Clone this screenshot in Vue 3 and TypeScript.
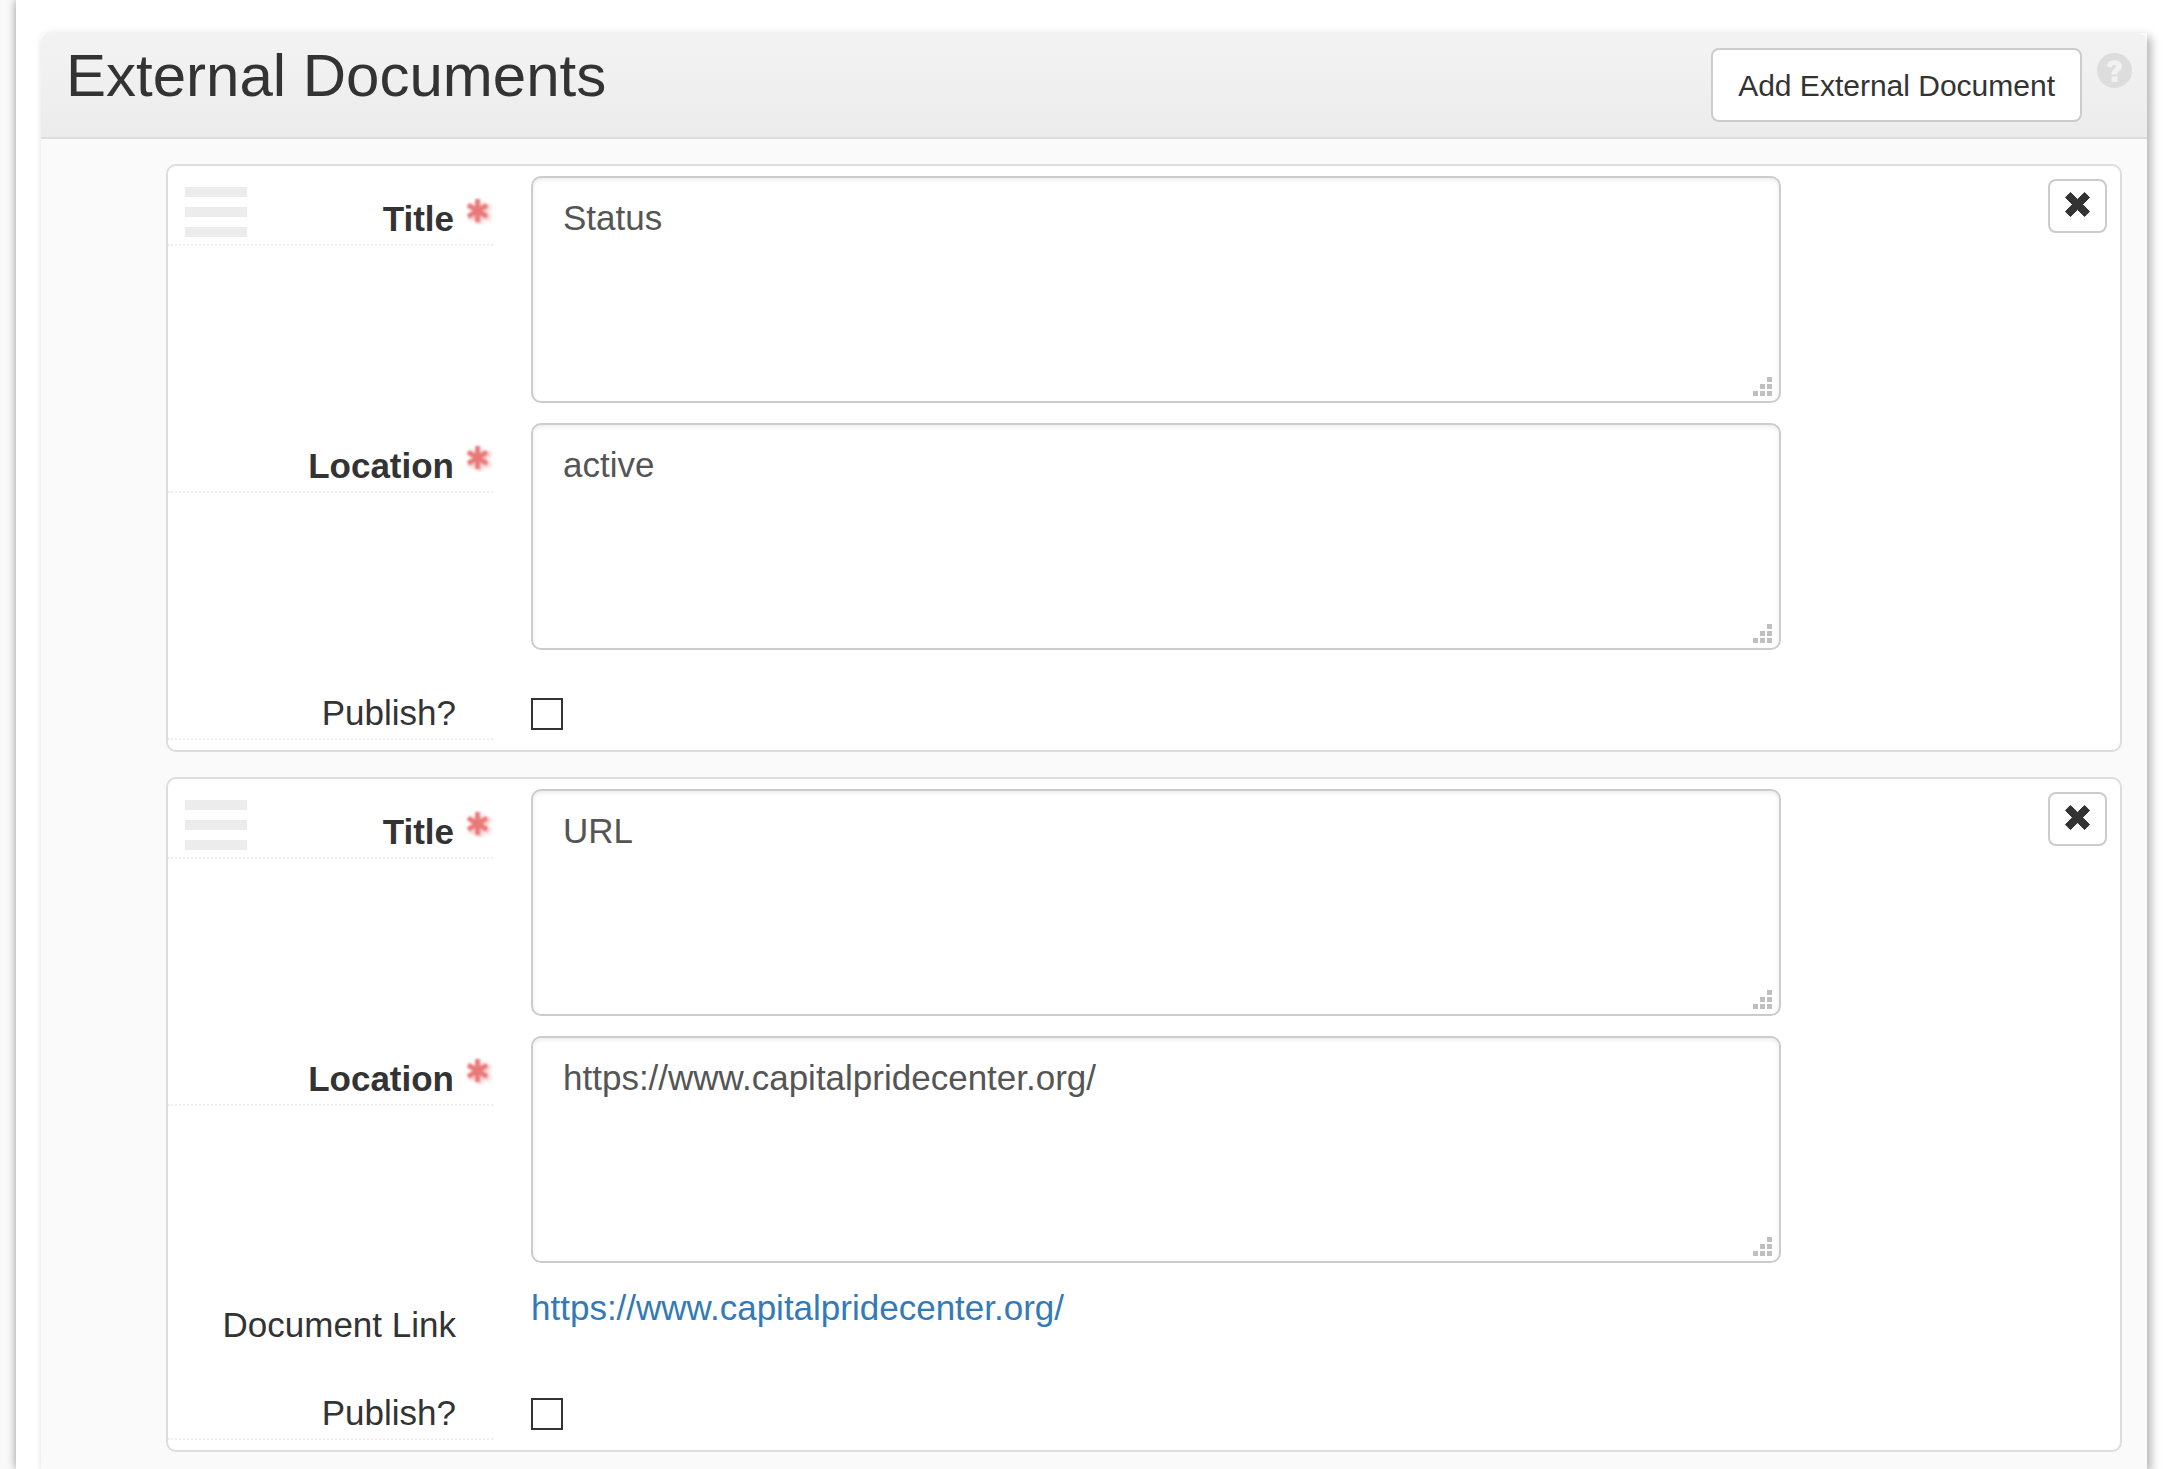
<script setup lang="ts">
import { ref } from 'vue'

interface ExternalDocument {
  id: number
  title: string
  location: string
  link?: string
  publish: boolean
}

const documents = ref<ExternalDocument[]>([
  { id: 1, title: 'Status', location: 'active', publish: false },
  {
    id: 2,
    title: 'URL',
    location: 'https://www.capitalpridecenter.org/',
    link: 'https://www.capitalpridecenter.org/',
    publish: false,
  },
])

const textFields = [
  { key: 'title', label: 'Title' },
  { key: 'location', label: 'Location' },
] as const

function addDocument() {
  const id = Math.max(0, ...documents.value.map((d) => d.id)) + 1
  documents.value.push({ id, title: '', location: '', publish: false })
}

function removeDocument(id: number) {
  documents.value = documents.value.filter((d) => d.id !== id)
}
</script>

<template>
  <main class="page">
    <section class="panel">
      <header class="panel-head">
        <h1>External Documents</h1>
        <button type="button" class="btn add" @click="addDocument">Add External Document</button>
        <button type="button" class="help" aria-label="Help">
          <svg viewBox="0 0 35 35" width="35" height="35" aria-hidden="true">
            <circle cx="17.500" cy="17.500" r="17.500" fill="#ddd" />
            <path
              d="M9.800 13.300C10.500 9.200 13.300 7.200 17.300 7.200C21.700 7.200 25 9.800 25 13.300C25 16 23.500 17.300 22 18.300C20.600 19.200 20.300 19.700 20.300 21.500H14.500C14.500 18.600 15 17.200 17 16C18.500 15.100 19 14.600 19 13.600C19 12.400 18.200 11.800 17.100 11.800C15.600 11.800 15.200 12.700 14.200 14.800Z"
              fill="#f1f1f1"
            />
            <rect x="14.500" y="23.300" width="6" height="5.700" fill="#f1f1f1" />
          </svg>
        </button>
      </header>

      <div class="panel-body">
        <article v-for="doc in documents" :key="doc.id" class="card">
          <div v-for="(field, i) in textFields" :key="field.key" class="row">
            <div class="label-cell ruled">
              <span v-if="i === 0" class="handle" aria-hidden="true"><i /><i /><i /></span>
              <label class="required" :for="`${field.key}-${doc.id}`">
                {{ field.label }}
                <svg class="star" viewBox="0 0 28 28" width="28" height="28" aria-hidden="true">
                  <g fill="none" stroke-width="4.500">
                    <path class="star-shade" d="M14.500 4V27M5 9L25 22M25 9L5 22" stroke="#e88" />
                    <path class="star-core" d="M12.500 2V25M3 8L22 19.500M22 8L3 19.500" stroke="#e97878" />
                  </g>
                </svg>
              </label>
            </div>
            <div class="control area">
              <textarea :id="`${field.key}-${doc.id}`" v-model="doc[field.key]" spellcheck="false" />
              <svg class="grip" viewBox="0 0 19 19" width="19" height="19" aria-hidden="true">
                <path
                  d="M14 0h5v5h-5zM7 7h5v5h-5zM14 7h5v5h-5zM0 14h5v5h-5zM7 14h5v5h-5zM14 14h5v5h-5z"
                  fill="#bfbfbf"
                />
              </svg>
            </div>
            <div class="side">
              <button
                v-if="i === 0"
                type="button"
                class="btn remove"
                aria-label="Remove document"
                @click="removeDocument(doc.id)"
              >
                <svg viewBox="0 0 25 25" width="25" height="25" aria-hidden="true">
                  <path
                    d="M5.400 0.500L12.500 7.400L19.600 0.500L24.500 5.400L17.600 12.500L24.500 19.600L19.600 24.500L12.500 17.600L5.400 24.500L0.500 19.600L7.400 12.500L0.500 5.400Z"
                    fill="#333"
                    stroke="#333"
                    stroke-linejoin="round"
                  />
                </svg>
              </button>
            </div>
          </div>

          <div v-if="doc.link" class="row">
            <div class="label-cell"><span class="plain">Document Link</span></div>
            <div class="control">
              <a :href="doc.link">{{ doc.link }}</a>
            </div>
            <div class="side" />
          </div>

          <div class="row">
            <div class="label-cell ruled">
              <label class="plain" :for="`publish-${doc.id}`">Publish?</label>
            </div>
            <div class="control">
              <input :id="`publish-${doc.id}`" v-model="doc.publish" type="checkbox" />
            </div>
            <div class="side" />
          </div>
        </article>
      </div>
    </section>
  </main>
</template>

<style>
body {
  background: #f9f9f9;
}
</style>

<style scoped>
.page,
.page * {
  box-sizing: border-box;
}

.page {
  display: flex;
  flex-direction: column;
  min-height: 100vh;
  margin-left: 16px;
  padding: 33px 21px 0 25px;
  background: #fff;
  box-shadow: 0 0 9px rgba(0, 0, 0, 0.4);
  color: #333;
  font-family: 'Liberation Sans', Arial, sans-serif;
  font-size: 35px;
  line-height: 50px;
}

.panel {
  flex: 1;
  background: #fafafa;
  box-shadow: 4px 4px 9px rgba(0, 0, 0, 0.3);
}

.panel-head {
  display: flex;
  align-items: flex-start;
  height: 106px;
  padding: 10px 15px 0 25px;
  border-bottom: 2px solid #ddd;
  border-radius: 9px 9px 0 0;
  background: linear-gradient(#f3f3f3, #ececec);
}

h1 {
  flex: 1;
  margin: 0;
  font-size: 60px;
  font-weight: 400;
  line-height: 66px;
}

.btn {
  border: 2px solid #ccc;
  border-radius: 8px;
  background: #fff;
  color: #333;
  font: inherit;
  cursor: pointer;
}

.add {
  height: 74px;
  margin-top: 5px;
  padding: 2px 25px 0;
  font-size: 30px;
}

.help {
  display: flex;
  margin: 10px 0 0 15px;
  padding: 0;
  border: 0;
  background: none;
}

.panel-body {
  display: flex;
  flex-direction: column;
  gap: 25px;
  padding: 25px 25px 16px 125px;
}

.card {
  display: flex;
  flex-direction: column;
  gap: 20px;
  padding: 10px 0;
  border: 2px solid #ddd;
  border-radius: 10px;
  background: #fff;
}

.row {
  display: flex;
  align-items: flex-start;
}

.label-cell {
  display: flex;
  flex: 0 0 325px;
  padding-top: 17px;
}

.ruled {
  padding-top: 18px;
  border-bottom: 2px dotted #eee;
}

.plain,
.required {
  margin-left: auto;
}

.plain {
  padding-right: 37px;
}

.required {
  display: flex;
  gap: 11px;
  font-weight: 700;
}

.star {
  margin-top: 3px;
}

.star-shade {
  filter: blur(2px);
  opacity: 0.6;
}

.star-core {
  filter: blur(1px);
}

.handle {
  display: flex;
  flex-direction: column;
  gap: 10px;
  width: 62px;
  margin: -7px 0 0 17px;
}

.handle i {
  height: 10px;
  background: #ececec;
}

.control {
  flex: 1;
  margin-left: 38px;
}

.area {
  position: relative;
  display: flex;
}

textarea {
  flex: 1;
  height: 227px;
  margin: 0;
  padding: 15px 30px;
  border: 2px solid #ccc;
  border-radius: 10px;
  background: #fff;
  box-shadow: inset 0 2px 4px rgba(0, 0, 0, 0.08);
  color: #555;
  font: inherit;
  resize: none;
}

.grip {
  position: absolute;
  right: 9px;
  bottom: 7px;
  pointer-events: none;
}

.side {
  display: flex;
  flex: 0 0 339px;
  justify-content: flex-end;
  padding: 3px 13px 0 0;
}

.remove {
  display: flex;
  justify-content: center;
  width: 59px;
  height: 54px;
  padding: 11px 0 0;
}

a {
  color: #337ab7;
  text-decoration: none;
}

input {
  display: block;
  width: 32px;
  height: 32px;
  margin: 28px 0 0;
  border: 2px solid #333;
  background: #fff;
  appearance: none;
}

input:checked {
  background: #333;
  box-shadow: inset 0 0 0 5px #fff;
}
</style>
